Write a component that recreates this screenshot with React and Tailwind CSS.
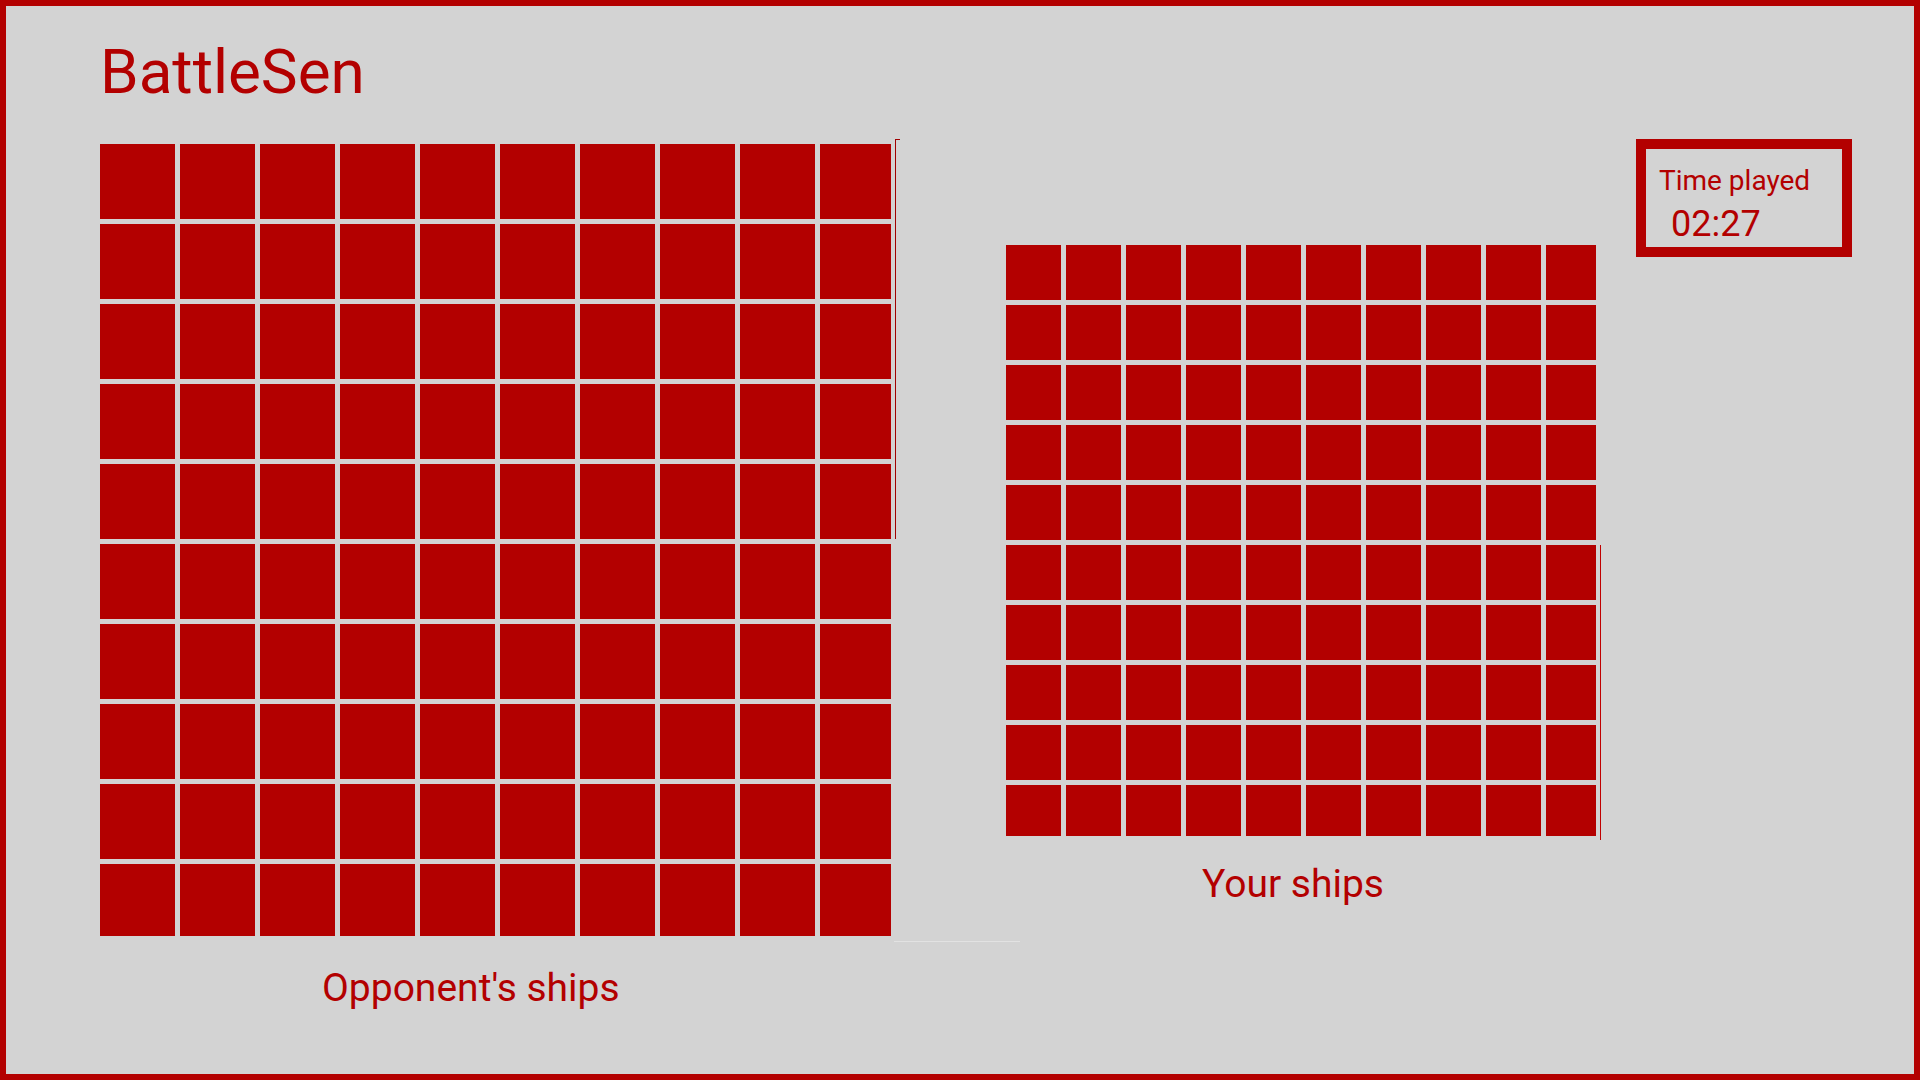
const cells = Array.from({ length: 100 }, (_, i) => i);

function Board({ big }) {
  return (
    <div className={big ? "w-[791px] h-[792px] overflow-hidden" : "w-[590px] h-[591px] overflow-hidden"}>
      <div className={big ? "grid grid-cols-[repeat(10,75px)] gap-[5px]" : "grid grid-cols-[repeat(10,55px)] gap-[5px]"}>
        {cells.map((i) => (
          <div key={i} className={big ? "w-[75px] h-[75px] bg-[#b30000]" : "w-[55px] h-[55px] bg-[#b30000]"}></div>
        ))}
      </div>
    </div>
  );
}

export default function App() {
  return (
    <div
      className="w-[1920px] h-[1080px] border-[6px] border-[#b30000] bg-[#d3d3d3] text-[#b30000] overflow-hidden"
      style={{ fontFamily: "Roboto, 'Liberation Sans', sans-serif" }}
    >
      <h1 className="ml-[94px] mt-[35px] text-[62px] leading-none font-normal">BattleSen</h1>

      <div className="flex mt-[36px]">
        {/* opponent board */}
        <div className="ml-[94px] w-[906px] flex flex-col">
          <div className="relative pt-[5px]">
            <Board big />
            <div className="absolute left-[795px] top-0 w-px h-[400px] bg-[#a00000]"></div>
            <div className="absolute left-[795px] top-0 w-[5px] h-px bg-[#a00000]"></div>
            <div className="absolute left-[794px] top-[802px] w-[126px] h-px bg-[#e2e2e2]"></div>
          </div>
          <p className="mt-[33px] ml-[222px] text-[39px] leading-none">Opponent's ships</p>
        </div>

        {/* own board */}
        <div className="w-[630px] flex flex-col">
          <div className="relative mt-[106px]">
            <Board />
            <div className="absolute left-[594px] top-[300px] w-px h-[295px] bg-[#c00000]"></div>
          </div>
          <p className="mt-[29px] ml-[196px] text-[39px] leading-none">Your ships</p>
        </div>

        {/* timer */}
        <div className="w-[216px] h-[118px] border-[10px] border-[#b30000] pl-[13px] pt-[18px]">
          <p className="text-[28px] leading-none">Time played</p>
          <p className="mt-[11px] ml-[12px] text-[36px] leading-none">02:27</p>
        </div>
      </div>
    </div>
  );
}
